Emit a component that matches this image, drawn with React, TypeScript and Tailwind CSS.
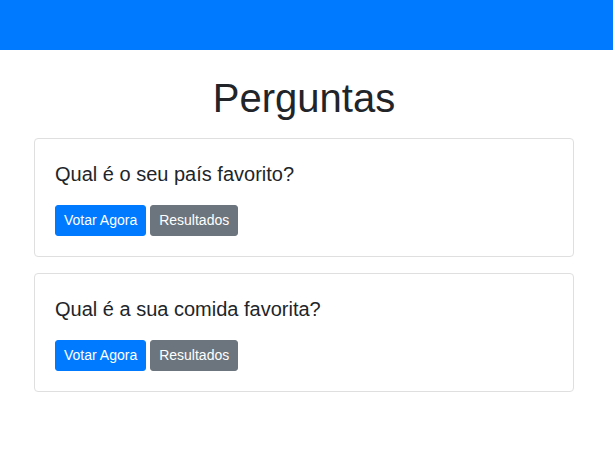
import React from "react";

const questions = ["Qual é o seu país favorito?", "Qual é a sua comida favorita?"];

export default function App() {
  return (
    <div className="min-h-[456px] bg-white text-[#212529]" style={{ fontFamily: '"Liberation Sans", Arial, sans-serif' }}>
      <div className="h-[50px] bg-[#007bff]" />
      <div className="ml-[34px] w-[540px]">
        <h1 className="mt-[24px] mb-[16px] text-center text-[40px] leading-[48px] font-normal">Perguntas</h1>
        <div className="flex flex-col gap-[16px]">
          {questions.map((q) => (
            <div key={q} className="border border-[#dfdfdf] rounded-[4px] p-[20px]">
              <h5 className="text-[20px] leading-[30px] mb-[16px] font-normal">{q}</h5>
              <div className="flex gap-[4px]">
                <button className="h-[31px] px-[8px] text-[14px] leading-[21px] bg-[#007bff] text-white rounded-[3px] border border-[#007bff]">Votar Agora</button>
                <button className="h-[31px] px-[8px] text-[14px] leading-[21px] bg-[#6c757d] text-white rounded-[3px] border border-[#6c757d]">Resultados</button>
              </div>
            </div>
          ))}
        </div>
      </div>
    </div>
  );
}
